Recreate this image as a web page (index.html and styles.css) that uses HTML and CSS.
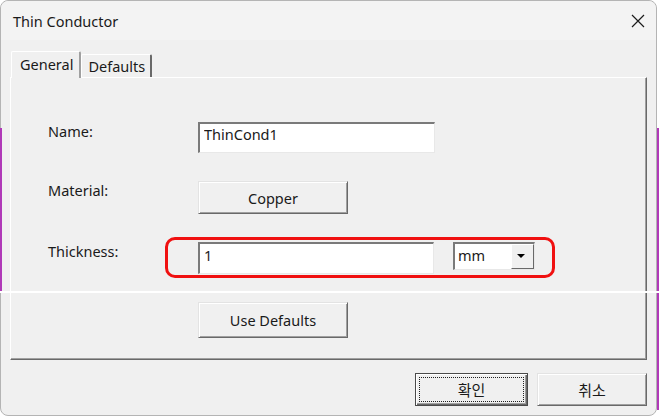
FILE: index.html
```html
<!DOCTYPE html>
<html lang="ko">
<head>
    <meta charset="UTF-8">
    <meta name="viewport" content="width=device-width, initial-scale=1.0">
    <title>Thin Conductor</title>
    <link rel="stylesheet" href="styles.css">
</head>
<body>
    <div class="window">
        <!-- Title bar -->
        <div class="titlebar">
            <span class="title">Thin Conductor</span>
            <svg class="close" width="14" height="14" viewBox="0 0 14 14">
                <path d="M1 1 L13 13 M13 1 L1 13" stroke="#1b1b1b" stroke-width="1.2" fill="none"/>
            </svg>
        </div>

        <div class="content">
            <!-- Tabs -->
            <div class="tabs">
                <div class="tab active">General</div>
                <div class="tab">Defaults</div>
            </div>

            <div class="panel">
                <div class="form">
                    <label class="label">Name:</label>
                    <div class="field">
                        <input class="text name-input" type="text" value="ThinCond1">
                    </div>

                    <label class="label">Material:</label>
                    <div class="field">
                        <button class="btn material-btn">Copper</button>
                    </div>

                    <label class="label">Thickness:</label>
                    <div class="field thickness">
                        <input class="text thick-input" type="text" value="1">
                        <div class="select">
                            <span class="select-value">mm</span>
                            <span class="select-arrow"></span>
                        </div>
                        <!-- red annotation box -->
                        <div class="highlight"></div>
                    </div>

                    <div></div>
                    <div class="field">
                        <button class="btn defaults-btn">Use Defaults</button>
                    </div>
                </div>
            </div>

            <!-- Dialog buttons -->
            <div class="footer">
                <button class="btn ok-btn">확인</button>
                <button class="btn cancel-btn">취소</button>
            </div>
        </div>

        <div class="edge edge-left"></div>
        <div class="edge edge-right"></div>
        <div class="scanline"></div>
    </div>
</body>
</html>
```

FILE: styles.css
```css
body {
    margin: 0;
    padding: 0;
    background: #ffffff;
    font-family: 'Noto Sans', sans-serif;
    font-size: 14.5px;
    color: #1a1a1a;
}
.window {
    position: relative;
    width: 657px;
    height: 416px;
    box-sizing: border-box;
    border: 1px solid #b4b4b4;
    border-radius: 8px;
    background: #f0f0f0;
    display: flex;
    flex-direction: column;
}
.titlebar {
    height: 39px;
    display: flex;
    align-items: center;
    justify-content: space-between;
    padding: 0 11px 0 12px;
    background: #f3f3f3;
    border-radius: 8px 8px 0 0;
}
.title {
    font-size: 14.5px;
    color: #1a1a1a;
}
.close {
    display: block;
}
.content {
    padding: 11px 9px 0 9px;
}
.tabs {
    display: flex;
    align-items: flex-end;
    height: 27px;
    margin-left: 1px;
    position: relative;
    z-index: 2;
}
.tab {
    height: 23px;
    box-sizing: border-box;
    margin-bottom: 1px;
    padding: 0 5px 0 6px;
    line-height: 22px;
    background: #f0f0f0;
    border-top: 1px solid #ffffff;
    border-left: 1px solid #ffffff;
    border-right: 2px solid #696969;
    border-radius: 2px 2px 0 0;
}
.tab.active {
    height: 27px;
    margin-bottom: 0;
    padding: 0 6px 0 8px;
    line-height: 25px;
    border-right: 2px solid #a0a0a0;
}
.panel {
    margin-top: -1px;
    height: 283px;
    box-sizing: border-box;
    border-top: 1px solid #ffffff;
    border-left: 1px solid #ffffff;
    border-right: 1px solid #696969;
    border-bottom: 1px solid #696969;
    box-shadow: inset -1px -1px 0 #a0a0a0;
}
.form {
    display: grid;
    grid-template-columns: 150px 1fr;
    grid-template-rows: 31px 33px 32px 36px;
    row-gap: 28px;
    padding: 44px 0 0 37px;
}
.label {
    align-self: start;
    line-height: 20px;
    margin-top: -1px;
}
.field {
    display: flex;
    align-items: flex-start;
}
.text {
    box-sizing: border-box;
    margin: 0;
    padding: 0 4px 0 4px;
    font-family: 'Noto Sans', sans-serif;
    font-size: 14.5px;
    color: #1a1a1a;
    background: #ffffff;
    border-top: 2px solid #7a7a7a;
    border-left: 2px solid #7a7a7a;
    border-right: 1px solid #e8e8e8;
    border-bottom: 1px solid #e8e8e8;
    outline: none;
    text-align: left;
}
.name-input {
    width: 237px;
    height: 31px;
    padding-bottom: 8px;
}
.thickness {
    position: relative;
}
.thick-input {
    width: 236px;
    height: 32px;
    padding-bottom: 8px;
}
.select {
    margin-left: 19px;
    width: 82px;
    height: 28px;
    box-sizing: border-box;
    display: flex;
    align-items: stretch;
    background: #ffffff;
    border-top: 2px solid #7a7a7a;
    border-left: 2px solid #7a7a7a;
    border-right: 1px solid #e8e8e8;
    border-bottom: 1px solid #e8e8e8;
}
.select-value {
    flex: 1;
    padding-left: 3px;
    line-height: 22px;
}
.select-arrow {
    width: 21px;
    position: relative;
    background: #f0f0f0;
    border-top: 1px solid #ffffff;
    border-left: 1px solid #ffffff;
    border-right: 1px solid #696969;
    border-bottom: 1px solid #696969;
}
.select-arrow::after {
    content: "";
    position: absolute;
    left: 5px;
    top: 9px;
    border-left: 4px solid transparent;
    border-right: 4px solid transparent;
    border-top: 4px solid #000000;
}
.highlight {
    position: absolute;
    left: -33px;
    top: -5px;
    width: 390px;
    height: 41px;
    box-sizing: border-box;
    border: 3px solid #f01010;
    border-radius: 10px;
    pointer-events: none;
}
.btn {
    box-sizing: border-box;
    margin: 0;
    padding: 0;
    font-family: 'Noto Sans', 'Noto Sans CJK KR', sans-serif;
    font-size: 14.5px;
    color: #1a1a1a;
    background: #f0f0f0;
    border-top: 1px solid #e3e3e3;
    border-left: 1px solid #e3e3e3;
    border-right: 1px solid #696969;
    border-bottom: 1px solid #696969;
    box-shadow: inset 1px 1px 0 #ffffff, inset -1px -1px 0 #a0a0a0;
    cursor: pointer;
}
.material-btn {
    width: 150px;
    height: 33px;
}
.defaults-btn {
    width: 150px;
    height: 36px;
}
.footer {
    display: flex;
    justify-content: flex-end;
    gap: 9px;
    margin-top: 13px;
}
.ok-btn,
.cancel-btn {
    height: 33px;
    font-family: 'Noto Sans CJK KR', sans-serif;
    font-size: 15px;
}
.ok-btn {
    width: 113px;
    border: 1px solid #4a4a4a;
    box-shadow: inset 1px 1px 0 #ffffff, inset -1px -1px 0 #696969, inset -2px -2px 0 #a0a0a0;
    outline: 1px dotted #202020;
    outline-offset: -5px;
}
.cancel-btn {
    width: 110px;
}
.edge {
    position: absolute;
    width: 2px;
    background: #b03ab8;
}
.edge-left {
    left: -1px;
    top: 127px;
    height: 164px;
}
.edge-right {
    right: -3px;
    top: 127px;
    height: 282px;
}
.scanline {
    position: absolute;
    left: -1px;
    top: 290px;
    width: 659px;
    height: 2px;
    background: #ffffff;
}
```
